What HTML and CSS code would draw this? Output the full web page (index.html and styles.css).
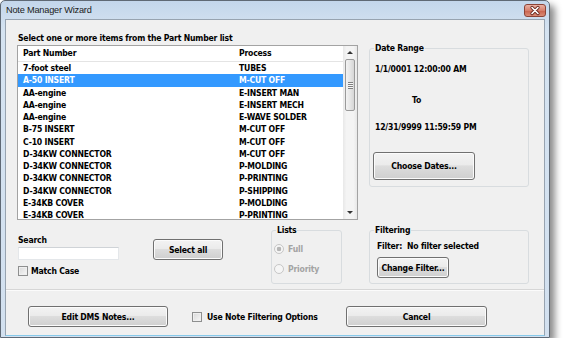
FILE: index.html
```html
<!DOCTYPE html>
<html lang="en">
<head>
    <meta charset="UTF-8">
    <meta name="viewport" content="width=device-width, initial-scale=1.0">
    <title>Note Manager Wizard</title>
    <link rel="stylesheet" href="styles.css">
</head>
<body>
    <div class="window">
        <div class="titlebar">
            <span class="title">Note Manager Wizard</span>
            <span class="close-btn">
                <svg width="20" height="11" viewBox="0 0 20 11">
                    <path d="M7 2.5 L13 8.5 M13 2.5 L7 8.5" stroke="#6b2a20" stroke-width="3.2" stroke-linecap="round" fill="none"/>
                    <path d="M7 2.5 L13 8.5 M13 2.5 L7 8.5" stroke="#fff" stroke-width="1.6" stroke-linecap="round" fill="none"/>
                </svg>
            </span>
        </div>

        <div class="client">
            <div class="top">
                <div class="left-col">
                    <div class="caption">Select one or more items from the Part Number list</div>

                    <!-- Part number list -->
                    <div class="listbox">
                        <div class="list-body">
                            <div class="list-header"><span class="col-part">Part Number</span><span>Process</span></div>
                            <div class="row"><span class="col-part">7-foot steel</span><span>TUBES</span></div>
                            <div class="row selected"><span class="col-part">A-50 INSERT</span><span>M-CUT OFF</span></div>
                            <div class="row"><span class="col-part">AA-engine</span><span>E-INSERT MAN</span></div>
                            <div class="row"><span class="col-part">AA-engine</span><span>E-INSERT MECH</span></div>
                            <div class="row"><span class="col-part">AA-engine</span><span>E-WAVE SOLDER</span></div>
                            <div class="row"><span class="col-part">B-75 INSERT</span><span>M-CUT OFF</span></div>
                            <div class="row"><span class="col-part">C-10 INSERT</span><span>M-CUT OFF</span></div>
                            <div class="row"><span class="col-part">D-34KW CONNECTOR</span><span>M-CUT OFF</span></div>
                            <div class="row"><span class="col-part">D-34KW CONNECTOR</span><span>P-MOLDING</span></div>
                            <div class="row"><span class="col-part">D-34KW CONNECTOR</span><span>P-PRINTING</span></div>
                            <div class="row"><span class="col-part">D-34KW CONNECTOR</span><span>P-SHIPPING</span></div>
                            <div class="row"><span class="col-part">E-34KB COVER</span><span>P-MOLDING</span></div>
                            <div class="row"><span class="col-part">E-34KB COVER</span><span>P-PRINTING</span></div>
                        </div>
                        <div class="scrollbar">
                            <div class="scroll-btn"><span class="arrow-up"></span></div>
                            <div class="thumb"><span class="grip"></span></div>
                            <div class="scroll-space"></div>
                            <div class="scroll-btn"><span class="arrow-down"></span></div>
                        </div>
                    </div>

                    <div class="controls">
                        <div class="search">
                            <label class="field-label">Search</label>
                            <div class="textbox"></div>
                            <div class="check-row match-case"><span class="check"></span>Match Case</div>
                        </div>
                        <button class="btn select-all">Select all</button>
                        <fieldset class="group lists">
                            <legend>Lists</legend>
                            <div class="group-body">
                                <div class="radio-row"><span class="radio checked"></span>Full</div>
                                <div class="radio-row second"><span class="radio"></span>Priority</div>
                            </div>
                        </fieldset>
                    </div>
                </div>

                <div class="right-col">
                    <fieldset class="group date-range">
                        <legend>Date Range</legend>
                        <div class="group-body">
                            <div class="line">1/1/0001 12:00:00 AM</div>
                            <div class="line to">To</div>
                            <div class="line date-end">12/31/9999 11:59:59 PM</div>
                            <button class="btn choose-dates">Choose Dates...</button>
                        </div>
                    </fieldset>

                    <fieldset class="group filtering">
                        <legend>Filtering</legend>
                        <div class="group-body">
                            <div class="line">Filter:&nbsp; No filter selected</div>
                            <button class="btn change-filter">Change Filter...</button>
                        </div>
                    </fieldset>
                </div>
            </div>

            <div class="separator"></div>

            <div class="bottom">
                <button class="btn edit-notes">Edit DMS Notes...</button>
                <div class="check-row use-filter"><span class="check"></span>Use Note Filtering Options</div>
                <button class="btn cancel">Cancel</button>
            </div>
        </div>
    </div>
</body>
</html>
```

FILE: styles.css
```css
* {
    box-sizing: border-box;
}

body {
    margin: 0;
    background: #fff;
    color: #000;
    font-family: 'DejaVu Sans Condensed', 'Liberation Sans', Arial, sans-serif;
    font-size: 8.6px;
    font-weight: bold;
    letter-spacing: -0.2px;
}

/* Window frame */
.window {
    width: 550px;
    height: 338px;
    display: flex;
    flex-direction: column;
    padding: 0 4px 1px;
    border: 1px solid #5f6975;
    border-radius: 5px 5px 0 0;
    background: linear-gradient(#c3d6eb, #d5e3f1 30px, #d2e0ef);
    box-shadow: 5px 5px 7px rgba(0, 0, 0, 0.45);
}

.titlebar {
    height: 18px;
    margin: 0 -4px;
    padding: 0 3px 0 5px;
    display: flex;
    align-items: center;
    justify-content: space-between;
}

.title {
    font-family: 'Liberation Sans', Arial, sans-serif;
    font-size: 9.2px;
    font-weight: normal;
    color: #1b1b1b;
}

.close-btn {
    align-self: flex-start;
    margin-top: 3px;
    width: 22px;
    height: 13px;
    display: flex;
    align-items: center;
    justify-content: center;
    border: 1px solid #8c4336;
    border-radius: 3px;
    background: linear-gradient(#eab1a4, #d67f6c 50%, #c9624d 52%, #d98b76);
}

/* Client area */
.client {
    flex: 1;
    padding-top: 12px;
    background: #f0f0f0;
    border: 1px solid #97a3b0;
    border-bottom-color: #86c9ea;
}

.top {
    display: flex;
    padding-left: 11px;
}

.left-col {
    width: 341px;
}

.right-col {
    width: 160px;
    margin-left: 11px;
    padding-top: 10px;
}

.caption {
    height: 13px;
    line-height: 13px;
    margin-left: 1px;
}

/* List view */
.listbox {
    height: 175px;
    display: flex;
    overflow: hidden;
    background: #fff;
    border: 1px solid #a3a3a3;
}

.list-body {
    flex: 1;
    overflow: hidden;
}

.list-header {
    display: flex;
    height: 16px;
    line-height: 15px;
    padding-left: 5px;
    border-bottom: 1px solid #e4e4e4;
}

.row {
    display: flex;
    height: 12.25px;
    line-height: 12.25px;
    padding-left: 5px;
    white-space: nowrap;
}

.row.selected {
    background: #3399ff;
    color: #fff;
}

.col-part {
    width: 216px;
}

.scrollbar {
    width: 14px;
    display: flex;
    flex-direction: column;
    background: linear-gradient(90deg, #e8e8e8, #f4f4f4 25%, #f4f4f4 75%, #e8e8e8);
}

.scroll-btn {
    height: 13px;
    display: flex;
    align-items: center;
    justify-content: center;
}

.arrow-up,
.arrow-down {
    width: 0;
    height: 0;
    border-left: 3px solid transparent;
    border-right: 3px solid transparent;
}

.arrow-up {
    border-bottom: 3px solid #333;
}

.arrow-down {
    border-top: 3px solid #333;
}

.thumb {
    height: 52px;
    margin: 0 2px;
    display: flex;
    align-items: center;
    justify-content: center;
    border: 1px solid #9a9a9a;
    border-radius: 2px;
    background: linear-gradient(90deg, #f3f3f3, #e6e6e6 50%, #d6d6d6);
}

.grip {
    width: 5px;
    height: 7px;
    background: repeating-linear-gradient(#7f7f7f 0 1px, #f7f7f7 1px 2px);
}

.scroll-space {
    flex: 1;
}

/* Search, select all and lists */
.controls {
    height: 64px;
    display: flex;
    align-items: flex-start;
}

.search {
    width: 101px;
    margin-left: 1px;
    padding-top: 14px;
}

.field-label {
    display: block;
    height: 12px;
    line-height: 12px;
}

.textbox {
    height: 13px;
    margin-top: 1px;
    background: #fff;
    border: 1px solid #e4e7ea;
    border-top-color: #cfd3d7;
}

.check-row {
    display: flex;
    align-items: center;
    height: 10px;
}

.match-case {
    margin-top: 6px;
    gap: 3px;
}

.check {
    width: 10px;
    height: 10px;
    flex: none;
    border: 1px solid #8e8f8f;
    background: linear-gradient(135deg, #d8d8d8, #f8f8f8);
    box-shadow: inset 0 0 0 1px #efefef;
}

/* Buttons */
.btn {
    padding: 0;
    font: inherit;
    letter-spacing: inherit;
    color: #000;
    border: 1px solid #707070;
    border-radius: 3px;
    background: linear-gradient(#f3f3f3, #ebebeb 45%, #dddddd 50%, #cfcfcf);
    box-shadow: inset 0 0 0 1px #fbfbfb;
}

.select-all {
    width: 70px;
    height: 21px;
    margin: 19px 0 0 34px;
}

/* Group boxes */
.group {
    margin: 0;
    padding: 0;
    min-width: 0;
    border: 1px solid #d8dcdf;
    border-radius: 3px;
}

.group legend {
    height: 12px;
    line-height: 12px;
    margin-left: 4px;
    padding: 0 1px;
}

.lists {
    width: 71px;
    height: 60px;
    margin: 4px 0 0 48px;
}

.lists .group-body {
    padding: 7px 0 0 2px;
}

.radio-row {
    display: flex;
    align-items: center;
    gap: 4px;
    height: 12px;
    color: #a3a3a3;
}

.radio-row.second {
    margin-top: 8px;
}

.radio {
    width: 10px;
    height: 10px;
    border-radius: 50%;
    border: 1px solid #c6c6c6;
    background: #f5f5f5;
}

.radio.checked {
    background: radial-gradient(circle, #b5b5b5 0 2px, #f5f5f5 2.6px);
}

.line {
    height: 12px;
    line-height: 12px;
    white-space: nowrap;
}

.date-range {
    height: 145px;
}

.date-range .group-body {
    padding: 9px 0 0 5px;
}

.to {
    margin: 19px 0 0 37px;
}

.date-end {
    margin-top: 15px;
}

.choose-dates {
    width: 102px;
    height: 28px;
    margin: 19px 0 0 -2px;
}

.filtering {
    height: 60px;
    margin-top: 37px;
}

.filtering .group-body {
    padding: 4px 0 0 7px;
}

.change-filter {
    width: 72px;
    height: 21px;
    margin-top: 5px;
}

.separator {
    height: 2px;
    margin-top: 5px;
    border-top: 1px solid #d6d6d6;
    border-bottom: 1px solid #fbfbfb;
}

/* Bottom buttons */
.bottom {
    display: flex;
    align-items: center;
    padding: 15px 0 0 22px;
}

.edit-notes {
    width: 140px;
    height: 21px;
}

.use-filter {
    width: 154px;
    margin-left: 24px;
    gap: 5px;
}

.cancel {
    width: 141px;
    height: 21px;
}
```
